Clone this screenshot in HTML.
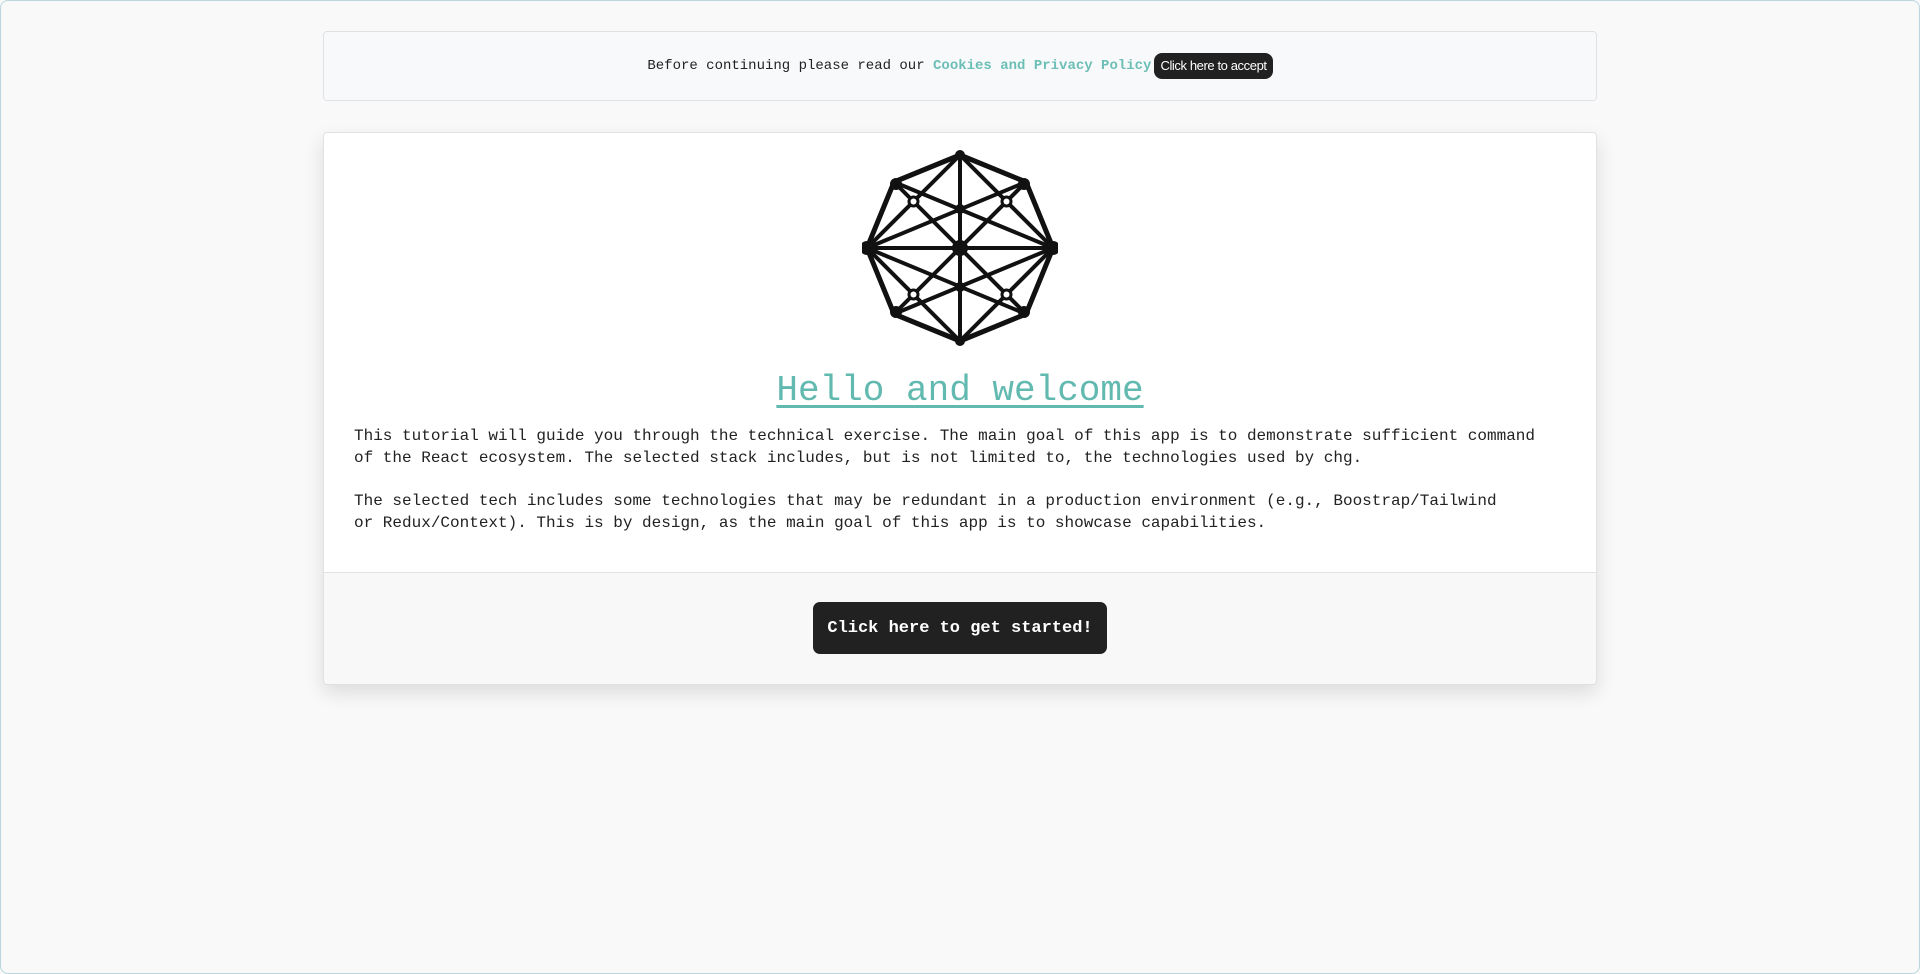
<!DOCTYPE html>
<html><head><meta charset="utf-8"><style>
html,body{margin:0;padding:0}
body{width:1920px;height:974px;background:#f9f9f9;position:relative;overflow:hidden;font-family:"Liberation Mono",monospace;color:#222}
.frame{position:absolute;left:0;top:0;border:1px solid #b9d7dc;border-radius:8px;box-sizing:border-box;width:1920px;height:974px}
.banner{position:absolute;left:323px;top:31px;width:1274px;height:70px;background:#f8f9fa;border:1px solid #dfe1e5;border-radius:4px;box-sizing:border-box;display:flex;align-items:center;justify-content:center;font-size:14px}
.banner a{color:#6cbfb6;font-weight:bold;text-decoration:none}
.acc{display:inline-block;background:#212121;color:#fff;font-family:"Liberation Sans",sans-serif;font-size:13px;letter-spacing:-0.4px;border-radius:8px;padding:5px 6px;margin-left:3px;line-height:16px}
.card{position:absolute;left:323px;top:132px;width:1274px;height:553px;background:#fff;border:1px solid #dfe1e5;border-radius:4px;box-sizing:border-box;box-shadow:0 8px 20px rgba(0,0,0,0.12);overflow:hidden}
.foot{position:absolute;left:0;top:439px;width:100%;height:114px;background:#f8f8f8;border-top:1px solid #e3e3e3}
h1{position:absolute;left:0;width:100%;top:366px;margin:0;text-align:center;font-size:36px;font-weight:normal;line-height:50px}
h1 a{color:#62b9b0;text-decoration:underline;text-decoration-thickness:3px;text-underline-offset:5px}
p{position:absolute;left:354px;margin:0;font-size:16px;line-height:22px;width:1240px;white-space:nowrap}
.btn{position:absolute;left:813px;top:602px;width:294px;height:52px;background:#212121;color:#fff;border-radius:7px;font-size:17px;font-weight:bold;display:flex;align-items:center;justify-content:center}
</style></head><body>
<div class="frame"></div>
<div class="banner"><span>Before continuing please read our&nbsp;</span><a>Cookies and Privacy Policy</a><span class="acc">Click here to accept</span></div>
<div class="card"><div class="foot"></div></div>
<svg style="position:absolute;left:862px;top:150px" width="196" height="196" viewBox="-98 -98 196 196">
<g stroke="#111" stroke-width="4" fill="none" stroke-linejoin="round">
<polygon points="0,-93 66,-66 93,0 66,66 0,93 -66,66 -93,0 -66,-66" stroke-width="5"/>
<polygon points="0,-93 93,0 0,93 -93,0"/>
<line x1="0" y1="-93" x2="0" y2="93"/><line x1="-93" y1="0" x2="93" y2="0"/>
<line x1="-66" y1="-66" x2="66" y2="66"/><line x1="66" y1="-66" x2="-66" y2="66"/>
<line x1="-93" y1="0" x2="66" y2="-66"/><line x1="-93" y1="0" x2="66" y2="66"/>
<line x1="93" y1="0" x2="-66" y2="-66"/><line x1="93" y1="0" x2="-66" y2="66"/>
</g>
<g fill="#111"><circle cx="0" cy="0" r="8"/><circle cx="-93" cy="0" r="7"/><circle cx="93" cy="0" r="7"/><circle cx="0" cy="-93" r="5"/><circle cx="0" cy="93" r="5"/>
<circle cx="-64" cy="-64" r="6"/><circle cx="64" cy="-64" r="6"/><circle cx="-64" cy="64" r="6"/><circle cx="64" cy="64" r="6"/>
<circle cx="0" cy="-39" r="5"/><circle cx="0" cy="39" r="5"/>
<circle cx="-46.5" cy="-46.5" r="6"/><circle cx="46.5" cy="-46.5" r="6"/><circle cx="-46.5" cy="46.5" r="6"/><circle cx="46.5" cy="46.5" r="6"/></g>
<g fill="#fff"><circle cx="-46.5" cy="-46.5" r="3"/><circle cx="46.5" cy="-46.5" r="3"/><circle cx="-46.5" cy="46.5" r="3"/><circle cx="46.5" cy="46.5" r="3"/></g>
</svg>
<h1><a>Hello and welcome</a></h1>
<p style="top:425px">This tutorial will guide you through the technical exercise. The main goal of this app is to demonstrate sufficient command<br>of the React ecosystem. The selected stack includes, but is not limited to, the technologies used by chg.</p>
<p style="top:490px">The selected tech includes some technologies that may be redundant in a production environment (e.g., Boostrap/Tailwind<br>or Redux/Context). This is by design, as the main goal of this app is to showcase capabilities.</p>
<div class="btn">Click here to get started!</div>
</body></html>
